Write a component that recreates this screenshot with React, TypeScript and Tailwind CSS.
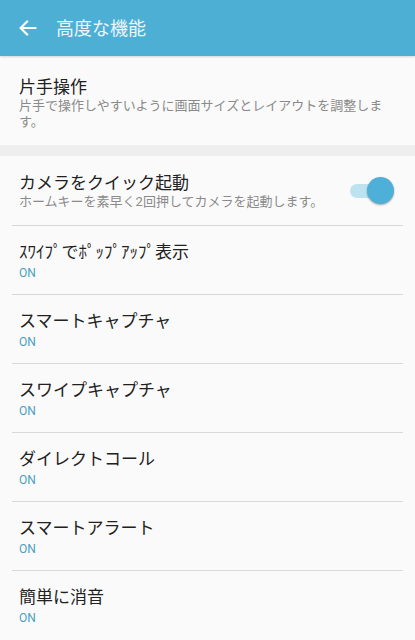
const font = { fontFamily: '"Roboto", "Noto Sans CJK JP", sans-serif' }

const items = [
  'ｽﾜｲﾌﾟでﾎﾟｯﾌﾟｱｯﾌﾟ表示',
  'スマートキャプチャ',
  'スワイプキャプチャ',
  'ダイレクトコール',
  'スマートアラート',
  '簡単に消音',
]

function OnRow({ title, last }: { title: string; last?: boolean }) {
  return (
    <div className="mx-3">
      <div className="flex h-[68px] flex-col justify-center px-[7px] pt-[2px]">
        <p className="text-[17px] leading-[22px] text-[#212121]">{title}</p>
        <p className="mt-[2px] text-[12px] leading-[16px] text-[#4a9fc0]">ON</p>
      </div>
      {!last && <div className="h-px bg-[#d9d9d9]" />}
    </div>
  )
}

export default function App() {
  return (
    <div className="h-[640px] w-[415px] overflow-hidden bg-[#fafafa]" style={font}>
      <header className="flex h-[56px] items-center bg-[#4eafd4] shadow-[0_1px_2px_rgba(0,0,0,0.15)]">
        <svg className="ml-[17px] h-[22px] w-[22px]" viewBox="0 0 24 24" fill="none" stroke="white" strokeWidth="2.4" strokeLinecap="square">
          <path d="M20 12H5M11 5l-7 7 7 7" />
        </svg>
        <h1 className="ml-[17px] text-[18px] text-white/90">高度な機能</h1>
      </header>

      <div className="flex h-[89px] flex-col justify-center px-[19px] pt-[4px]">
        <p className="text-[17px] leading-[22px] text-[#212121]">片手操作</p>
        <p className="text-[13px] leading-[16px] text-[#8a8a8a]">
          片手で操作しやすいように画面サイズとレイアウトを調整します。
        </p>
      </div>

      <div className="h-[11px] bg-[#eeeeee]" />

      <div className="mx-3">
        <div className="flex h-[69px] items-center justify-between px-[7px]">
          <div>
            <p className="text-[17px] leading-[22px] text-[#212121]">カメラをクイック起動</p>
            <p className="text-[13px] leading-[16px] text-[#8a8a8a]">
              ホームキーを素早く2回押してカメラを起動します。
            </p>
          </div>
          <div className="relative mr-[10px] h-[14px] w-[36px] rounded-full bg-[#bde3f1]">
            <div className="absolute -right-[8px] -top-[7px] h-[27px] w-[27px] rounded-full bg-[#4eb0d8] shadow-[0_1px_2px_rgba(0,0,0,0.35)]" />
          </div>
        </div>
        <div className="h-px bg-[#d9d9d9]" />
      </div>

      {items.map((t, i) => (
        <OnRow key={t} title={t} last={i === items.length - 1} />
      ))}
    </div>
  )
}
